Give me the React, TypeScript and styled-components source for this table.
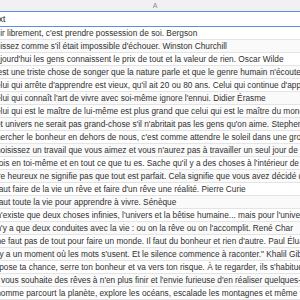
import React from 'react';
import styled, { createGlobalStyle } from 'styled-components';

const GlobalStyle = createGlobalStyle`
  html, body {
    margin: 0;
    padding: 0;
    background: #ffffff;
    overflow: hidden;
  }
  body {
    font-family: 'Liberation Sans', Arial, sans-serif;
  }
`;

const quotes = [
  "Agir librement, c'est prendre possession de soi. Bergson",
  "Agissez comme s'il était impossible d'échouer. Winston Churchill",
  "Aujourd'hui les gens connaissent le prix de tout et la valeur de rien. Oscar Wilde",
  "C'est une triste chose de songer que la nature parle et que le genre humain n'écoute pas. Victor Hugo",
  "Celui qui arrête d'apprendre est vieux, qu'il ait 20 ou 80 ans. Celui qui continue d'apprendre reste jeune. Henry Ford",
  "Celui qui connaît l'art de vivre avec soi-même ignore l'ennui. Didier Érasme",
  "Celui qui est le maître de lui-même est plus grand que celui qui est le maître du monde. Saint Augustin",
  "Cet univers ne serait pas grand-chose s'il n'abritait pas les gens qu'on aime. Stephen Hawking",
  "Chercher le bonheur en dehors de nous, c'est comme attendre le soleil dans une grotte orientée au nord.",
  "Choisissez un travail que vous aimez et vous n'aurez pas à travailler un seul jour de votre vie. Confucius",
  "Crois en toi-même et en tout ce que tu es. Sache qu'il y a des choses à l'intérieur de toi plus grandes que tout obstacle.",
  "Être heureux ne signifie pas que tout est parfait. Cela signifie que vous avez décidé de regarder au-delà des imperfections.",
  "Il faut faire de la vie un rêve et faire d'un rêve une réalité. Pierre Curie",
  "Il faut toute la vie pour apprendre à vivre. Sénèque",
  "Il n'existe que deux choses infinies, l'univers et la bêtise humaine... mais pour l'univers, je n'ai pas de certitude absolue.",
  "Il n'y a que deux conduites avec la vie : ou on la rêve ou on l'accomplit. René Char",
  "Il ne faut pas de tout pour faire un monde. Il faut du bonheur et rien d'autre. Paul Éluard",
  "\"Il y a un moment où les mots s'usent. Et le silence commence à raconter.\" Khalil Gibran",
  "Impose ta chance, serre ton bonheur et va vers ton risque. À te regarder, ils s'habitueront. René Char",
  "Je vous souhaite des rêves à n'en plus finir et l'envie furieuse d'en réaliser quelques-uns. Jacques Brel",
  "L'homme parcourt la planète, explore les océans, escalade les montagnes et même va dans l'espace.",
];

const Sheet = styled.div`
  width: 300px;
  height: 300px;
  overflow: hidden;
  color: #303030;
`;

const Column = styled.div`
  margin-left: -12px;
  width: 334px;
  display: flex;
  flex-direction: column;
`;

const ColumnHeader = styled.div`
  height: 11px;
  flex: none;
  background: #f1f1f3;
  display: flex;
  align-items: center;
  justify-content: center;
  font-size: 7px;
  color: #8a8a8a;
`;

const HeaderCell = styled.div`
  height: 14px;
  border-top: 1px solid #5b8fde;
  border-bottom: 1px solid #5b8fde;
  display: flex;
  align-items: center;
  padding-left: 2px;
  font-size: 8.3px;
  color: #111;
  white-space: nowrap;
  background: #ffffff;
`;

const Cell = styled.div<{ $shade?: boolean }>`
  height: 12px;
  border-bottom: 1px solid #e4e4e6;
  display: flex;
  align-items: center;
  padding-left: 2px;
  font-size: 8.3px;
  white-space: nowrap;
  overflow: hidden;
  background: ${(p) => (p.$shade ? '#fafafa' : '#ffffff')};
`;

export default function App() {
  return (
    <>
      <GlobalStyle />
      <Sheet>
        <Column>
          <ColumnHeader>A</ColumnHeader>
          <HeaderCell>Text</HeaderCell>
          {quotes.map((q, i) => (
            <Cell key={i} $shade={i % 2 === 1}>
              {q}
            </Cell>
          ))}
        </Column>
      </Sheet>
    </>
  );
}
